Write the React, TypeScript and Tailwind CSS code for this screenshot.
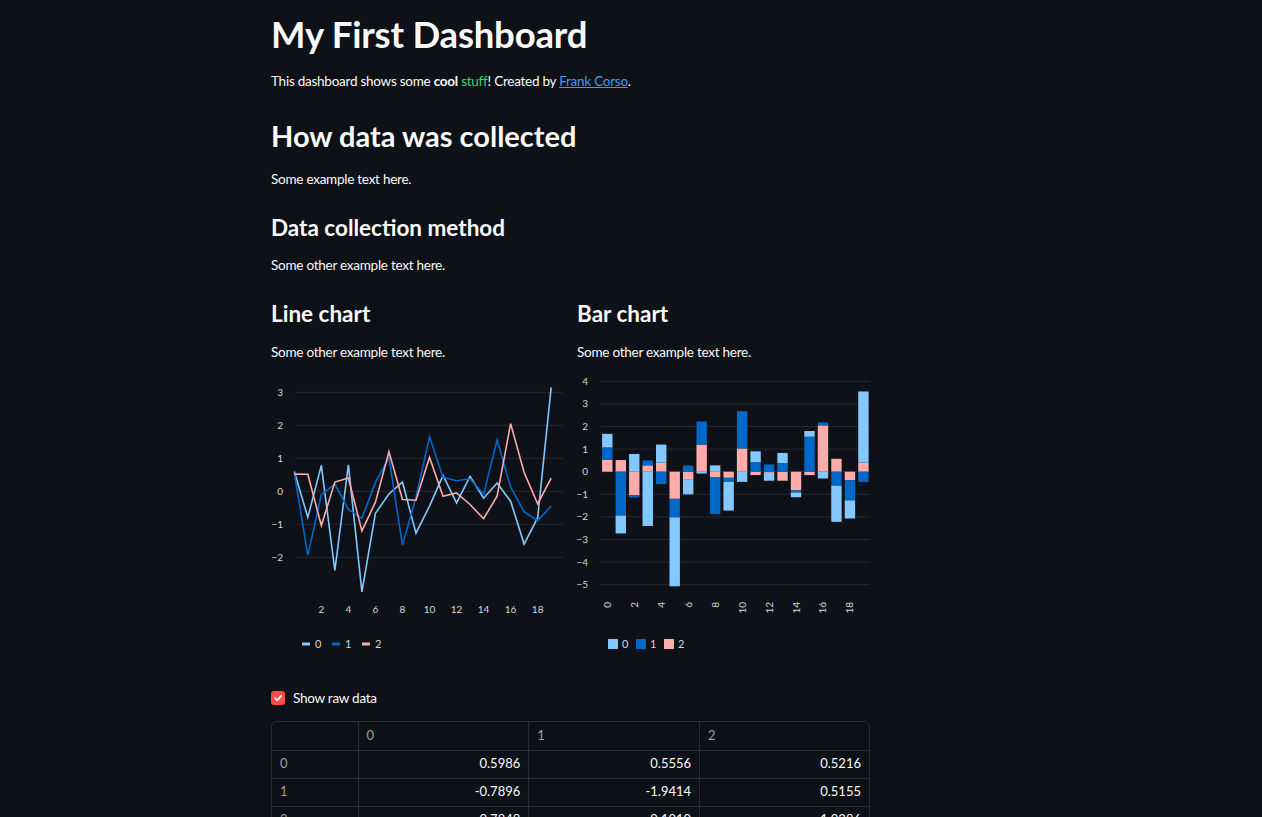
import React from "react";

const s0 = [0.5986, -0.7896, 0.7848, -2.4, 0.8, -3.05, -0.67, -0.08, 0.28, -1.27, -0.45, 0.48, -0.35, 0.45, -0.21, 0.25, -0.3, -1.6, -0.8, 3.15];
const s1 = [0.5556, -1.9414, -0.101, 0.22, -0.55, -0.82, 0.27, 1.02, -1.63, -0.18, 1.65, 0.42, 0.32, 0.38, -0.09, 1.55, 0.13, -0.62, -0.89, -0.45];
const s2 = [0.5216, 0.5155, -1.0386, 0.28, 0.4, -1.2, -0.33, 1.2, -0.25, -0.27, 1.03, -0.15, -0.05, -0.4, -0.83, -0.15, 2.05, 0.57, -0.38, 0.4];

const COLORS = ["#83c9ff", "#0068c9", "#ffabab"];
const GRID = "#262830";
const LABEL = "#d5d6da";
const FONT = "'Source Sans Pro', Lato, sans-serif";

function LineChart() {
  const x = (i: number) => 23.3 + 13.52 * i;
  const y = (v: number) => 121.3 - 33 * v;
  const series = [s0, s1, s2];
  return (
    <svg width="292" height="290" className="block overflow-visible" fontFamily={FONT}>
      {[3, 2, 1, 0, -1, -2].map((v) => (
        <g key={v}>
          <line x1="24" x2="292" y1={y(v)} y2={y(v)} stroke={GRID} strokeWidth="1" />
          <text x="12" y={y(v) + 3.5} fontSize="10" fill={LABEL} textAnchor="end">
            {v < 0 ? `\u2212${-v}` : v}
          </text>
        </g>
      ))}
      {[2, 4, 6, 8, 10, 12, 14, 16, 18].map((t) => (
        <text key={t} x={x(t)} y="243" fontSize="10" fill={LABEL} textAnchor="middle">
          {t}
        </text>
      ))}
      {series.map((s, k) => (
        <polyline
          key={k}
          points={s.map((v, i) => `${x(i)},${y(v)}`).join(" ")}
          fill="none"
          stroke={COLORS[k]}
          strokeWidth="1.6"
          strokeLinejoin="miter"
        />
      ))}
      {[0, 1, 2].map((k) => (
        <g key={k}>
          <rect x={31 + k * 30} y="272.5" width="8" height="3" fill={COLORS[k]} />
          <text x={44 + k * 30} y="278" fontSize="11" fill={LABEL}>
            {k}
          </text>
        </g>
      ))}
    </svg>
  );
}

function BarChart() {
  const cx = (i: number) => 30.3 + 13.48 * i;
  const y = (v: number) => 101.7 - 22.6 * v;
  const bars: React.ReactNode[] = [];
  for (let i = 0; i < 20; i++) {
    let pos = 0;
    let neg = 0;
    [2, 1, 0].forEach((k) => {
      const v = [s0, s1, s2][k][i];
      let a: number, b: number;
      if (v >= 0) {
        a = pos;
        b = pos + v;
        pos = b;
      } else {
        a = neg;
        b = neg + v;
        neg = b;
      }
      const top = y(Math.max(a, b));
      const h = Math.abs(y(a) - y(b));
      bars.push(
        <rect key={`${i}-${k}`} x={cx(i) - 5.2} y={top} width="10.4" height={h} fill={COLORS[k]} />
      );
    });
  }
  return (
    <svg width="293" height="290" className="block overflow-visible" fontFamily={FONT}>
      {[4, 3, 2, 1, 0, -1, -2, -3, -4, -5].map((v) => (
        <g key={v}>
          <line x1="24" x2="293" y1={y(v)} y2={y(v)} stroke={GRID} strokeWidth="1" />
          <text x="11" y={y(v) + 3.5} fontSize="10" fill={LABEL} textAnchor="end">
            {v < 0 ? `\u2212${-v}` : v}
          </text>
        </g>
      ))}
      {bars}
      {[0, 2, 4, 6, 8, 10, 12, 14, 16, 18].map((t) => (
        <text
          key={t}
          x="0"
          y="0"
          fontSize="10"
          fill={LABEL}
          textAnchor="end"
          transform={`translate(${cx(t) + 3.5},232) rotate(-90)`}
        >
          {t}
        </text>
      ))}
      {[0, 1, 2].map((k) => (
        <g key={k}>
          <rect x={31 + k * 28} y="269" width="10" height="10" fill={COLORS[k]} />
          <text x={45 + k * 28} y="278" fontSize="11" fill={LABEL}>
            {k}
          </text>
        </g>
      ))}
    </svg>
  );
}

const rows = [
  [0.5986, 0.5556, 0.5216],
  [-0.7896, -1.9414, 0.5155],
  [0.7848, -0.101, -1.0386],
  [-2.4016, 0.2203, 0.2817],
];

function DataTable() {
  return (
    <div className="overflow-hidden rounded-md border border-[#2b2d35]">
      <table className="w-full border-collapse text-[13px]">
        <thead>
          <tr className="h-[28px] text-[#9b9da5]">
            <th className="w-[86px] border-b border-[#2b2d35]" />
            {["0", "1", "2"].map((h) => (
              <th key={h} className="border-b border-l border-[#2b2d35] px-2 text-left font-normal">
                {h}
              </th>
            ))}
          </tr>
        </thead>
        <tbody>
          {rows.map((r, i) => (
            <tr key={i} className="h-[28px]">
              <td className="border-b border-[#2b2d35] px-2 text-[#9b9da5]">{i}</td>
              {r.map((v, j) => (
                <td key={j} className="border-b border-l border-[#2b2d35] px-2 text-right text-[#fafafa]">
                  {v.toFixed(4)}
                </td>
              ))}
            </tr>
          ))}
        </tbody>
      </table>
    </div>
  );
}

const body = "text-[13.5px] leading-[20px] tracking-[-0.25px]";

export default function App() {
  return (
    <div className="min-h-screen bg-[#0e1117] font-['Source_Sans_Pro',Lato,sans-serif] text-[#fafafa]">
      <div className="w-[870px] pl-[271px] pt-[14px] pb-10">
        <h1 className="h-[40px] text-[36.5px] font-bold leading-[40px] tracking-[-0.2px]">My First Dashboard</h1>
        <p className={`mt-[17px] ${body}`}>
          This dashboard shows some <b>cool</b> <span className="text-[#3dd56d]">stuff</span>! Created by{" "}
          <a href="#" className="text-[#3d9df3] underline">
            Frank Corso
          </a>
          .
        </p>
        <h2 className="mt-[27px] text-[29px] font-bold leading-[36px]">How data was collected</h2>
        <p className={`mt-[15px] ${body}`}>Some example text here.</p>
        <h3 className="mt-[24px] text-[22.5px] font-bold leading-[30px]">Data collection method</h3>
        <p className={`mt-[12px] ${body}`}>Some other example text here.</p>
        <div className="mt-[24px] grid grid-cols-[290px_1fr] gap-4">
          <div>
            <h3 className="text-[22.5px] font-bold leading-[30px]">Line chart</h3>
            <p className={`mt-[13px] ${body}`}>Some other example text here.</p>
            <div className="mt-[8px]">
              <LineChart />
            </div>
          </div>
          <div>
            <h3 className="text-[22.5px] font-bold leading-[30px]">Bar chart</h3>
            <p className={`mt-[13px] ${body}`}>Some other example text here.</p>
            <div className="mt-[8px]">
              <BarChart />
            </div>
          </div>
        </div>
        <label className={`mt-[28px] flex h-[20px] items-center gap-2 ${body}`}>
          <span className="flex h-[14px] w-[14px] items-center justify-center rounded-[3px] bg-[#ff4b4b]">
            <svg width="10" height="10" viewBox="0 0 10 10">
              <path d="M2 5.2 L4.2 7.4 L8.2 2.8" fill="none" stroke="white" strokeWidth="1.8" strokeLinecap="round" strokeLinejoin="round" />
            </svg>
          </span>
          Show raw data
        </label>
        <div className="mt-[13px]">
          <DataTable />
        </div>
      </div>
    </div>
  );
}
